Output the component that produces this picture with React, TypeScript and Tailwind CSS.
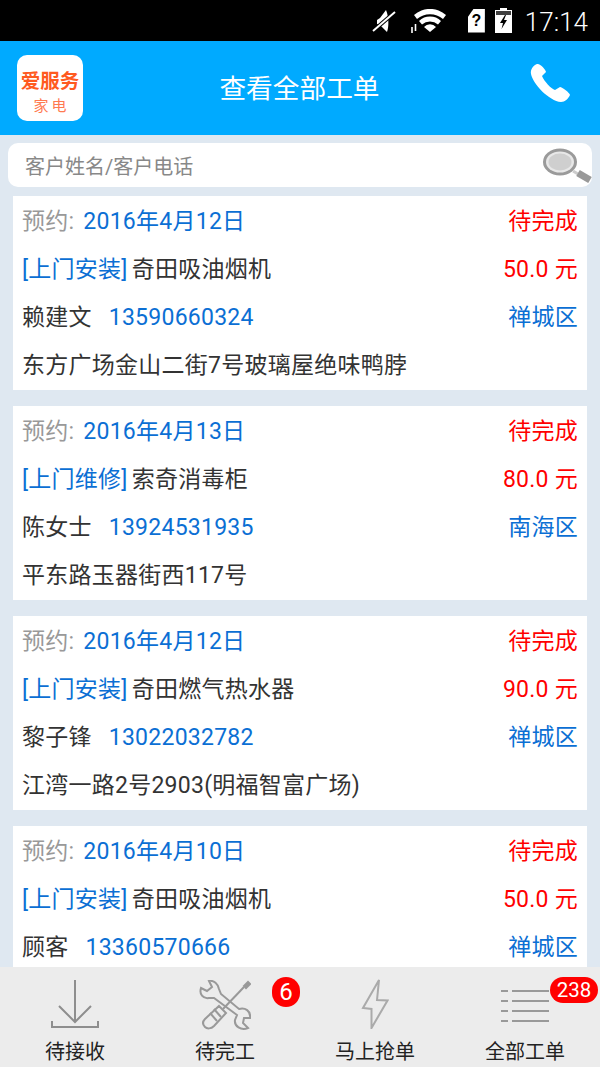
const orders = [
    { date: '2016年4月12日', type: '[上门安装]', item: '奇田吸油烟机', price: '50.0 元', name: '赖建文', phone: '13590660324', area: '禅城区', addr: '东方广场金山二街7号玻璃屋绝味鸭脖' },
    { date: '2016年4月13日', type: '[上门维修]', item: '索奇消毒柜', price: '80.0 元', name: '陈女士', phone: '13924531935', area: '南海区', addr: '平东路玉器街西117号' },
    { date: '2016年4月12日', type: '[上门安装]', item: '奇田燃气热水器', price: '90.0 元', name: '黎子锋', phone: '13022032782', area: '禅城区', addr: '江湾一路2号2903(明福智富广场)' },
    { date: '2016年4月10日', type: '[上门安装]', item: '奇田吸油烟机', price: '50.0 元', name: '顾客', phone: '13360570666', area: '禅城区', addr: '' },
];

function StatusIcons() {
    return (
        <div className="flex items-center text-white">
            <svg width="24" height="24" viewBox="0 0 24 24" className="mr-[14px]">
                <path d="M14 1 L8 9 L5 11 L5 15 L8 16 L15 23 C17 18 17 8 14 1 Z" fill="#fff" />
                <path d="M1 22 L23 3" stroke="#000" strokeWidth="4" />
                <path d="M1 22 L23 3" stroke="#fff" strokeWidth="2" />
            </svg>
            <svg width="36" height="24" viewBox="0 0 36 24" className="mr-[22px]">
                <path d="M4 6 A24 24 0 0 1 36 6 L33 10 A20 20 0 0 0 7 10 Z" fill="#fff" />
                <path d="M9 12 A16 16 0 0 1 31 12 L28 15.5 A12 12 0 0 0 12 15.5 Z" fill="#fff" />
                <path d="M14 18 A8 8 0 0 1 26 18 L20 23 Z" fill="#fff" />
                <path d="M2 18 L2 24 M5.5 15 L5.5 22" stroke="#fff" strokeWidth="1.6" />
            </svg>
            <div className="w-[17px] h-[24px] bg-white mr-[10px] flex items-center justify-center text-black text-[16px] font-bold leading-none [clip-path:polygon(35%_0,100%_0,100%_100%,0_100%,0_35%)] font-['Liberation_Sans',sans-serif]">?</div>
            <svg width="17" height="25" viewBox="0 0 17 25" className="mr-[13px]">
                <path d="M5 0 H12 V2 H17 V25 H0 V2 H5 Z" fill="#fff" />
                <path d="M1 3 H16 V7 H1 Z" fill="#000" opacity="0.75" />
                <path d="M10 7 L5 15 H8 L6.5 21 L12 12 H9 L11 7 Z" fill="#000" />
            </svg>
            <span className="text-[26px] leading-none font-['Roboto',sans-serif] font-light mt-[2px]">17:14</span>
        </div>
    );
}

function OrderCard({ order }: { order: (typeof orders)[number] }) {
    return (
        <div className="bg-white mx-[13px] mb-[16px] px-[9px] py-px shrink-0 text-[23px] tracking-[0.25px] text-[#333]">
            <div className="h-[48px] pt-[3px] flex items-center justify-between">
                <div>
                    <span className="text-[#999]">预约:</span>
                    <span className="text-[#0b6fd4] ml-[9px]">{order.date}</span>
                </div>
                <span className="text-[#f00]">待完成</span>
            </div>
            <div className="h-[48px] pt-[3px] flex items-center justify-between">
                <div>
                    <span className="text-[#0b6fd4]">{order.type}</span>
                    <span className="ml-[4px]">{order.item}</span>
                </div>
                <span className="text-[#f00]">{order.price}</span>
            </div>
            <div className="h-[48px] pt-[3px] flex items-center justify-between">
                <div>
                    {order.name}
                    <span className="text-[#0b6fd4] ml-[17px]">{order.phone}</span>
                </div>
                <span className="text-[#0b6fd4]">{order.area}</span>
            </div>
            <div className="h-[48px] pt-[3px] flex items-center">{order.addr}</div>
        </div>
    );
}

function NavItem({ label, children, badge }: { label: string; children: React.ReactNode; badge?: React.ReactNode }) {
    return (
        <div className="relative flex-1 flex flex-col items-center">
            <div className="h-[62px] mt-[8px] flex items-center justify-center">{children}</div>
            <span className="text-[20px] leading-[26px] text-[#222] mt-[2px]">{label}</span>
            {badge}
        </div>
    );
}

export default function App() {
    return (
        <div className="w-[600px] h-[1067px] flex flex-col overflow-hidden bg-[#dfe8f1] font-['Roboto','Noto_Sans_CJK_SC',sans-serif]">
            <div className="h-[41px] bg-black flex items-center justify-end pr-[12px] shrink-0">
                <StatusIcons />
            </div>

            <header className="h-[94px] bg-[#00aaff] flex items-center justify-between pl-[17px] pr-[30px] shrink-0">
                <div className="w-[66px] h-[66px] bg-white rounded-[10px] flex flex-col items-center justify-center pt-[11px]">
                    <span className="text-[#ff5a1f] text-[19.5px] leading-[24px] font-bold">爱服务</span>
                    <span className="text-[#ff7a50] text-[15px] leading-[24px] tracking-[3px] pl-[3px]">家电</span>
                </div>
                <h1 className="text-white text-[26.7px] font-normal -ml-[14px] mt-[2px]">查看全部工单</h1>
                <svg width="40" height="40" viewBox="0 0 40 40" fill="#fff" className="mb-[10px]">
                    <path d="M7 1 C4 2 0 6 1 11 C3 21 19 38 31 39 C35 39 38 36 40 32 C40 30 32 24 30 24 L25 27 C21 26 14 18 12 13 L16 9 C16 7 10 0 7 1 Z" />
                </svg>
            </header>

            <div className="h-[44px] mt-[8px] mx-[8px] bg-white rounded-[10px] flex items-center justify-between pl-[17px] shrink-0">
                <span className="text-[20px] text-[#888] mt-[3px]">客户姓名/客户电话</span>
                <svg width="52" height="36" viewBox="0 0 52 36">
                    <ellipse cx="20" cy="15" rx="17" ry="13.5" fill="#9a9a9a" />
                    <ellipse cx="20" cy="15" rx="14" ry="10.5" fill="#e8e8e8" />
                    <ellipse cx="20" cy="15" rx="11.5" ry="8.5" fill="#cfcfcf" />
                    <path d="M33 24 L38 27" stroke="#ccc" strokeWidth="3" />
                    <path d="M38 26 L50 33" stroke="#999" strokeWidth="7" />
                </svg>
            </div>

            <main className="flex-1 min-h-0 overflow-hidden flex flex-col mt-[9px]">
                {orders.map((order) => (
                    <OrderCard key={order.phone} order={order} />
                ))}
            </main>

            <nav className="h-[100px] bg-[#ececec] flex shrink-0">
                <NavItem label="待接收">
                    <svg width="52" height="52" viewBox="0 0 52 52" fill="none" stroke="#8e8e8e" strokeWidth="2">
                        <path d="M26 0 V42 M10 26 L26 42 L42 26" />
                        <path d="M3 41 V47 H49 V41" />
                    </svg>
                </NavItem>
                <NavItem
                    label="待完工"
                    badge={
                        <span className="absolute left-[122px] top-[10px] w-[28px] h-[30px] rounded-full bg-[#f00] text-white text-[24px] leading-none flex items-center justify-center">6</span>
                    }
                >
                    <svg width="52" height="52" viewBox="0 0 52 52" fill="none" stroke="#999" strokeWidth="2">
                        <path d="M10 1 L13 7 L8 11 L2 8 C0 14 4 19 10 18 L15 18 L38 35 L36 40 C35 46 42 51 49 48 L44 43 L45 38 L51 38 C52 31 46 27 40 29 L22 14 L20 9 C19 4 15 0 10 1 Z" />
                        <path d="M49 2 L45 6 L47 8 L51 4 Z" fill="#999" />
                        <path d="M45 7 L24 29" />
                        <path d="M20 26 L27 33 L15 46 C12 49 8 49 6 47 C3 44 4 41 6 39 Z" fill="#ececec" />
                        <path d="M11 33 L18 41 M15 29 L22 37" />
                    </svg>
                </NavItem>
                <NavItem label="马上抢单">
                    <svg width="28" height="50" viewBox="0 0 28 50" fill="none" stroke="#aaa" strokeWidth="2" className="mb-[5px]">
                        <path d="M18 1 L2 29 L10.5 30 L10.5 49 L26.5 21.5 L16 21 Z" />
                    </svg>
                </NavItem>
                <NavItem
                    label="全部工单"
                    badge={
                        <span className="absolute right-[2px] top-[10px] w-[48px] h-[26px] rounded-full bg-[#f00] text-white text-[20.5px] leading-none flex items-center justify-center">238</span>
                    }
                >
                    <svg width="48" height="36" viewBox="0 0 48 36" fill="none" stroke="#999" strokeWidth="2" className="mb-[2px]">
                        <path d="M0 4 H7 M11 4 H48 M0 14 H7 M11 14 H48 M0 24 H7 M11 24 H48 M0 34 H7 M11 34 H48" />
                    </svg>
                </NavItem>
            </nav>
        </div>
    );
}
